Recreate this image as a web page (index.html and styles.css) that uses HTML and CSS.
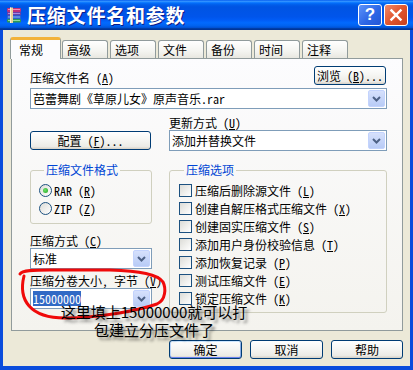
FILE: index.html
```html
<!DOCTYPE html>
<html>
<head>
<meta charset="utf-8">
<link rel="stylesheet" href="styles.css">
</head>
<body>
<div class="window">
  <div class="titlebar">
    <svg class="app-icon" viewBox="0 0 16 16">
      <rect x="1" y="1" width="14" height="4" rx="1" fill="#C0307A"/>
      <rect x="1" y="5" width="14" height="3.5" rx="1" fill="#6A3FA8"/>
      <rect x="1" y="8.5" width="14" height="3.5" rx="1" fill="#2C64CC"/>
      <rect x="1" y="12" width="14" height="3.5" rx="1" fill="#2E9A52"/>
      <rect x="2" y="2" width="12" height="1" fill="#F08AB8"/>
      <rect x="2" y="6" width="12" height="1" fill="#A98AE0"/>
      <rect x="2" y="9.5" width="12" height="1" fill="#8FB4F4"/>
      <rect x="2" y="13" width="12" height="1" fill="#8ED8A4"/>
      <rect x="4" y="0.5" width="3" height="15.5" fill="#E9D39A"/>
      <rect x="4" y="0.5" width="1" height="15.5" fill="#FFF4D0"/>
    </svg>
    <span class="title">压缩文件名和参数</span>
    <div class="caption-btns">
      <span class="cbtn help">?</span>
      <span class="cbtn close"><svg viewBox="0 0 24 22" width="24" height="22"><path d="M7 6 L17 16 M17 6 L7 16" stroke="#fff" stroke-width="2.6" stroke-linecap="square"/></svg></span>
    </div>
  </div>

  <div class="frame">
    <div class="tabs">
      <div class="tab active">常规</div>
      <div class="tab">高级</div>
      <div class="tab">选项</div>
      <div class="tab">文件</div>
      <div class="tab">备份</div>
      <div class="tab">时间</div>
      <div class="tab">注释</div>
    </div>

    <div class="panel">
      <div class="row-top">
        <span class="lbl">压缩文件名 (<u>A</u>)</span>
        <button class="btn browse">浏览 (<u>B</u>)...</button>
      </div>
      <div class="combo first">
        <span class="val">芭蕾舞剧《草原儿女》原声音乐.rar</span>
        <span class="drop"><svg viewBox="0 0 9 6" width="9" height="6"><path d="M1 1 L4.5 4.5 L8 1" stroke="#4D6185" stroke-width="2" fill="none"/></svg></span>
      </div>

      <div class="grid">
        <div class="cell-bottom">
          <button class="btn config">配置 (<u>F</u>)...</button>
        </div>
        <div>
          <div class="lbl line">更新方式 (<u>U</u>)</div>
          <div class="combo">
            <span class="val">添加并替换文件</span>
            <span class="drop"><svg viewBox="0 0 9 6" width="9" height="6"><path d="M1 1 L4.5 4.5 L8 1" stroke="#4D6185" stroke-width="2" fill="none"/></svg></span>
          </div>
        </div>

        <div class="col-left">
          <fieldset class="group format">
            <legend>压缩文件格式</legend>
            <div class="opt"><span class="radio checked"></span><span>RAR (<u>R</u>)</span></div>
            <div class="opt"><span class="radio"></span><span>ZIP (<u>Z</u>)</span></div>
          </fieldset>
          <div class="lbl line gap-a">压缩方式 (<u>C</u>)</div>
          <div class="combo">
            <span class="val">标准</span>
            <span class="drop"><svg viewBox="0 0 9 6" width="9" height="6"><path d="M1 1 L4.5 4.5 L8 1" stroke="#4D6185" stroke-width="2" fill="none"/></svg></span>
          </div>
          <div class="lbl line gap-b">压缩分卷大小, 字节 (<u>V</u>)</div>
          <div class="combo tight">
            <span class="val"><span class="sel">15000000</span></span>
            <span class="drop"><svg viewBox="0 0 9 6" width="9" height="6"><path d="M1 1 L4.5 4.5 L8 1" stroke="#4D6185" stroke-width="2" fill="none"/></svg></span>
          </div>
        </div>

        <fieldset class="group options">
          <legend>压缩选项</legend>
          <div class="opt"><span class="check"></span><span>压缩后删除源文件 (<u>L</u>)</span></div>
          <div class="opt"><span class="check"></span><span>创建自解压格式压缩文件 (<u>X</u>)</span></div>
          <div class="opt"><span class="check"></span><span>创建固实压缩文件 (<u>S</u>)</span></div>
          <div class="opt"><span class="check"></span><span>添加用户身份校验信息 (<u>T</u>)</span></div>
          <div class="opt"><span class="check"></span><span>添加恢复记录 (<u>P</u>)</span></div>
          <div class="opt"><span class="check"></span><span>测试压缩文件 (<u>E</u>)</span></div>
          <div class="opt"><span class="check"></span><span>锁定压缩文件 (<u>K</u>)</span></div>
        </fieldset>
      </div>
    </div>

    <div class="actions">
      <button class="btn action default">确定</button>
      <button class="btn action">取消</button>
      <button class="btn action">帮助</button>
    </div>
  </div>

  <svg class="redmark" viewBox="0 0 165 62" width="165" height="62">
    <path d="M14 14 C8 38, 20 56, 55 56 C90 56, 130 48, 147 42 C156 38, 156 26, 153 20 C148 12, 130 9, 100 8 L40 8 C25 8, 12 8, 10 12" stroke="#F00A0A" stroke-width="3" fill="none" stroke-linecap="round"/>
  </svg>
  <div class="note">这里填上15000000就可以打<br>包建立分压文件了</div>
</div>
</body>
</html>
```

FILE: styles.css
```css
* { box-sizing: border-box; }

body {
  margin: 0;
  font-family: "Noto Sans CJK SC", "Noto Sans", sans-serif;
  font-size: 12px;
  font-feature-settings: "hwid" 1;
  color: #000;
}

.window {
  position: relative;
  width: 413px;
  height: 370px;
  display: flex;
  flex-direction: column;
  background: #ECE9D8;
  overflow: hidden;
}

.titlebar {
  height: 30px;
  flex: none;
  display: flex;
  align-items: center;
  padding-left: 6px;
  background: linear-gradient(#0058EE 0%, #3593FF 4%, #288EFF 6%, #127DFF 8%, #036FFC 10%, #0262EE 14%, #0057E5 20%, #0054E3 24%, #0055EB 56%, #005BF5 66%, #026AFE 76%, #0062EF 86%, #0052D6 92%, #0040AB 94%, #003092 100%);
}

.app-icon {
  width: 16px;
  height: 16px;
  margin-right: 5px;
  flex: none;
}

.title {
  color: #fff;
  font-size: 19px;
  font-weight: bold;
  letter-spacing: 0.8px;
  line-height: 30px;
  text-shadow: 1px 1px 0 #0A1E8A;
}

.caption-btns {
  margin-left: auto;
  display: flex;
  gap: 2px;
  padding-right: 5px;
}

.cbtn {
  width: 24px;
  height: 22px;
  border: 1px solid #fff;
  border-radius: 3px;
  display: flex;
  align-items: center;
  justify-content: center;
  overflow: hidden;
}

.help {
  background: linear-gradient(135deg, #5C93FA 0%, #2E67E6 55%, #2356D6 100%);
  color: #fff;
  font-family: "Liberation Sans", sans-serif;
  font-weight: bold;
  font-size: 17px;
  line-height: 20px;
}

.close {
  background: linear-gradient(135deg, #F08A6B 0%, #E1552E 50%, #C8401E 100%);
}

.frame {
  flex: 1;
  display: flex;
  flex-direction: column;
  padding: 7px 7px 7px 8px;
  border-left: 3px solid #0A4CDC;
  border-right: 3px solid #0A4CDC;
  border-bottom: 4px solid #0A4CDC;
}

.tabs {
  flex: none;
  display: flex;
  align-items: flex-end;
  height: 22px;
  margin-bottom: -1px;
  position: relative;
  z-index: 1;
}

.tab {
  width: 46px;
  height: 18px;
  margin-bottom: 1px;
  margin-left: 2px;
  border: 1px solid #919B9C;
  border-bottom: none;
  border-radius: 3px 3px 0 0;
  background: linear-gradient(#FFFFFF, #F4F4F0 60%, #E8E7E0);
  padding: 1px 0 0 4px;
  line-height: 15px;
}

.tab.active {
  width: 51px;
  height: 22px;
  margin-left: -1px;
  margin-bottom: 0;
  background: #FCFCFE;
  border-top: 3px solid #F2B23A;
  border-radius: 3px 3px 0 0;
  padding: 2px 0 0 8px;
}

.tab.active + .tab { margin-left: 1px; }

.panel {
  flex: 1;
  border: 1px solid #919B9C;
  background: linear-gradient(#FCFCFE, #F4F3EE);
  padding: 7px 15px 0 18px;
  display: flex;
  flex-direction: column;
}

.row-top {
  display: flex;
  justify-content: space-between;
  align-items: flex-end;
  height: 19px;
}

.lbl { line-height: 14px; }
.lbl.line { line-height: 15px; height: 15px; white-space: nowrap; }
.gap-a { margin-top: 9px; }
.gap-b { margin-top: 4px; }

u { text-decoration: underline; text-underline-offset: 1px; }

.btn {
  font: inherit;
  font-feature-settings: "hwid" 1;
  color: #000;
  height: 19px;
  padding: 0;
  border: 1px solid #003C74;
  border-radius: 3px;
  background: linear-gradient(#FFFFFF 0%, #F6F6F3 45%, #ECEBE6 85%, #D6D0C5 100%);
  line-height: 15px;
  text-align: center;
}

.browse { width: 72px; margin-right: 1px; }

.combo {
  height: 21px;
  border: 1px solid #7F9DB9;
  background: #fff;
  display: flex;
  align-items: center;
  padding-left: 2px;
  white-space: nowrap;
}

.combo.first { margin-top: 3px; }

.combo .val {
  flex: 1;
  line-height: 15px;
  overflow: hidden;
}

.drop {
  width: 17px;
  height: 17px;
  margin: 1px;
  border: 1px solid #C3D3FD;
  border-radius: 2px;
  background: linear-gradient(#D6E1FC, #B8CBF6);
  display: flex;
  align-items: center;
  justify-content: center;
  flex: none;
}

.sel {
  background: #316AC5;
  color: #fff;
}

.grid {
  display: grid;
  grid-template-columns: 122px 218px;
  column-gap: 17px;
  row-gap: 12px;
  margin-top: 6px;
  align-items: start;
}

.cell-bottom {
  display: flex;
  align-items: flex-end;
  height: 36px;
}

.config { width: 121px; margin-bottom: 1px; }

.group {
  margin: 0;
  min-width: 0;
  border: 1px solid #D0D0BF;
  border-radius: 3px;
  padding: 4px 0 6px 8px;
}

.group legend {
  color: #0046D5;
  padding: 0 2px;
  margin-left: 5px;
  line-height: 14px;
}

.group.options { padding: 4px 0 5px 9px; }

.opt {
  display: flex;
  align-items: center;
  height: 18px;
  gap: 3px;
  white-space: nowrap;
  line-height: 15px;
}

.format .opt { gap: 2px; }

.radio {
  width: 13px;
  height: 13px;
  border: 1px solid #1C5180;
  border-radius: 50%;
  background: linear-gradient(135deg, #DCDCD7, #FFFFFF);
  display: flex;
  align-items: center;
  justify-content: center;
  flex: none;
}

.radio.checked::after {
  content: "";
  width: 5px;
  height: 5px;
  border-radius: 50%;
  background: radial-gradient(circle at 40% 40%, #6DE36A, #21A121);
}

.check {
  width: 13px;
  height: 13px;
  border: 1px solid #1C5180;
  background: linear-gradient(135deg, #DCDCD7, #FFFFFF);
  flex: none;
}

.actions {
  flex: none;
  display: flex;
  justify-content: flex-end;
  gap: 8px;
  margin-top: 9px;
}

.action { width: 73px; }
.actions .action:last-child { width: 72px; }

.default {
  box-shadow: inset 0 1px 0 #CEE7FF, inset 0 -1px 0 #6982EE, inset 1px 0 0 #B8D2F5, inset -1px 0 0 #89ADE4;
}

.redmark {
  position: absolute;
  left: 10px;
  top: 262px;
}

.note {
  position: absolute;
  left: 54px;
  top: 303px;
  width: 200px;
  text-align: center;
  font-size: 15px;
  line-height: 18px;
  font-feature-settings: normal;
  color: #000;
  text-shadow: 3px 3px 3px rgba(0, 0, 0, 0.5);
  white-space: nowrap;
}
```
